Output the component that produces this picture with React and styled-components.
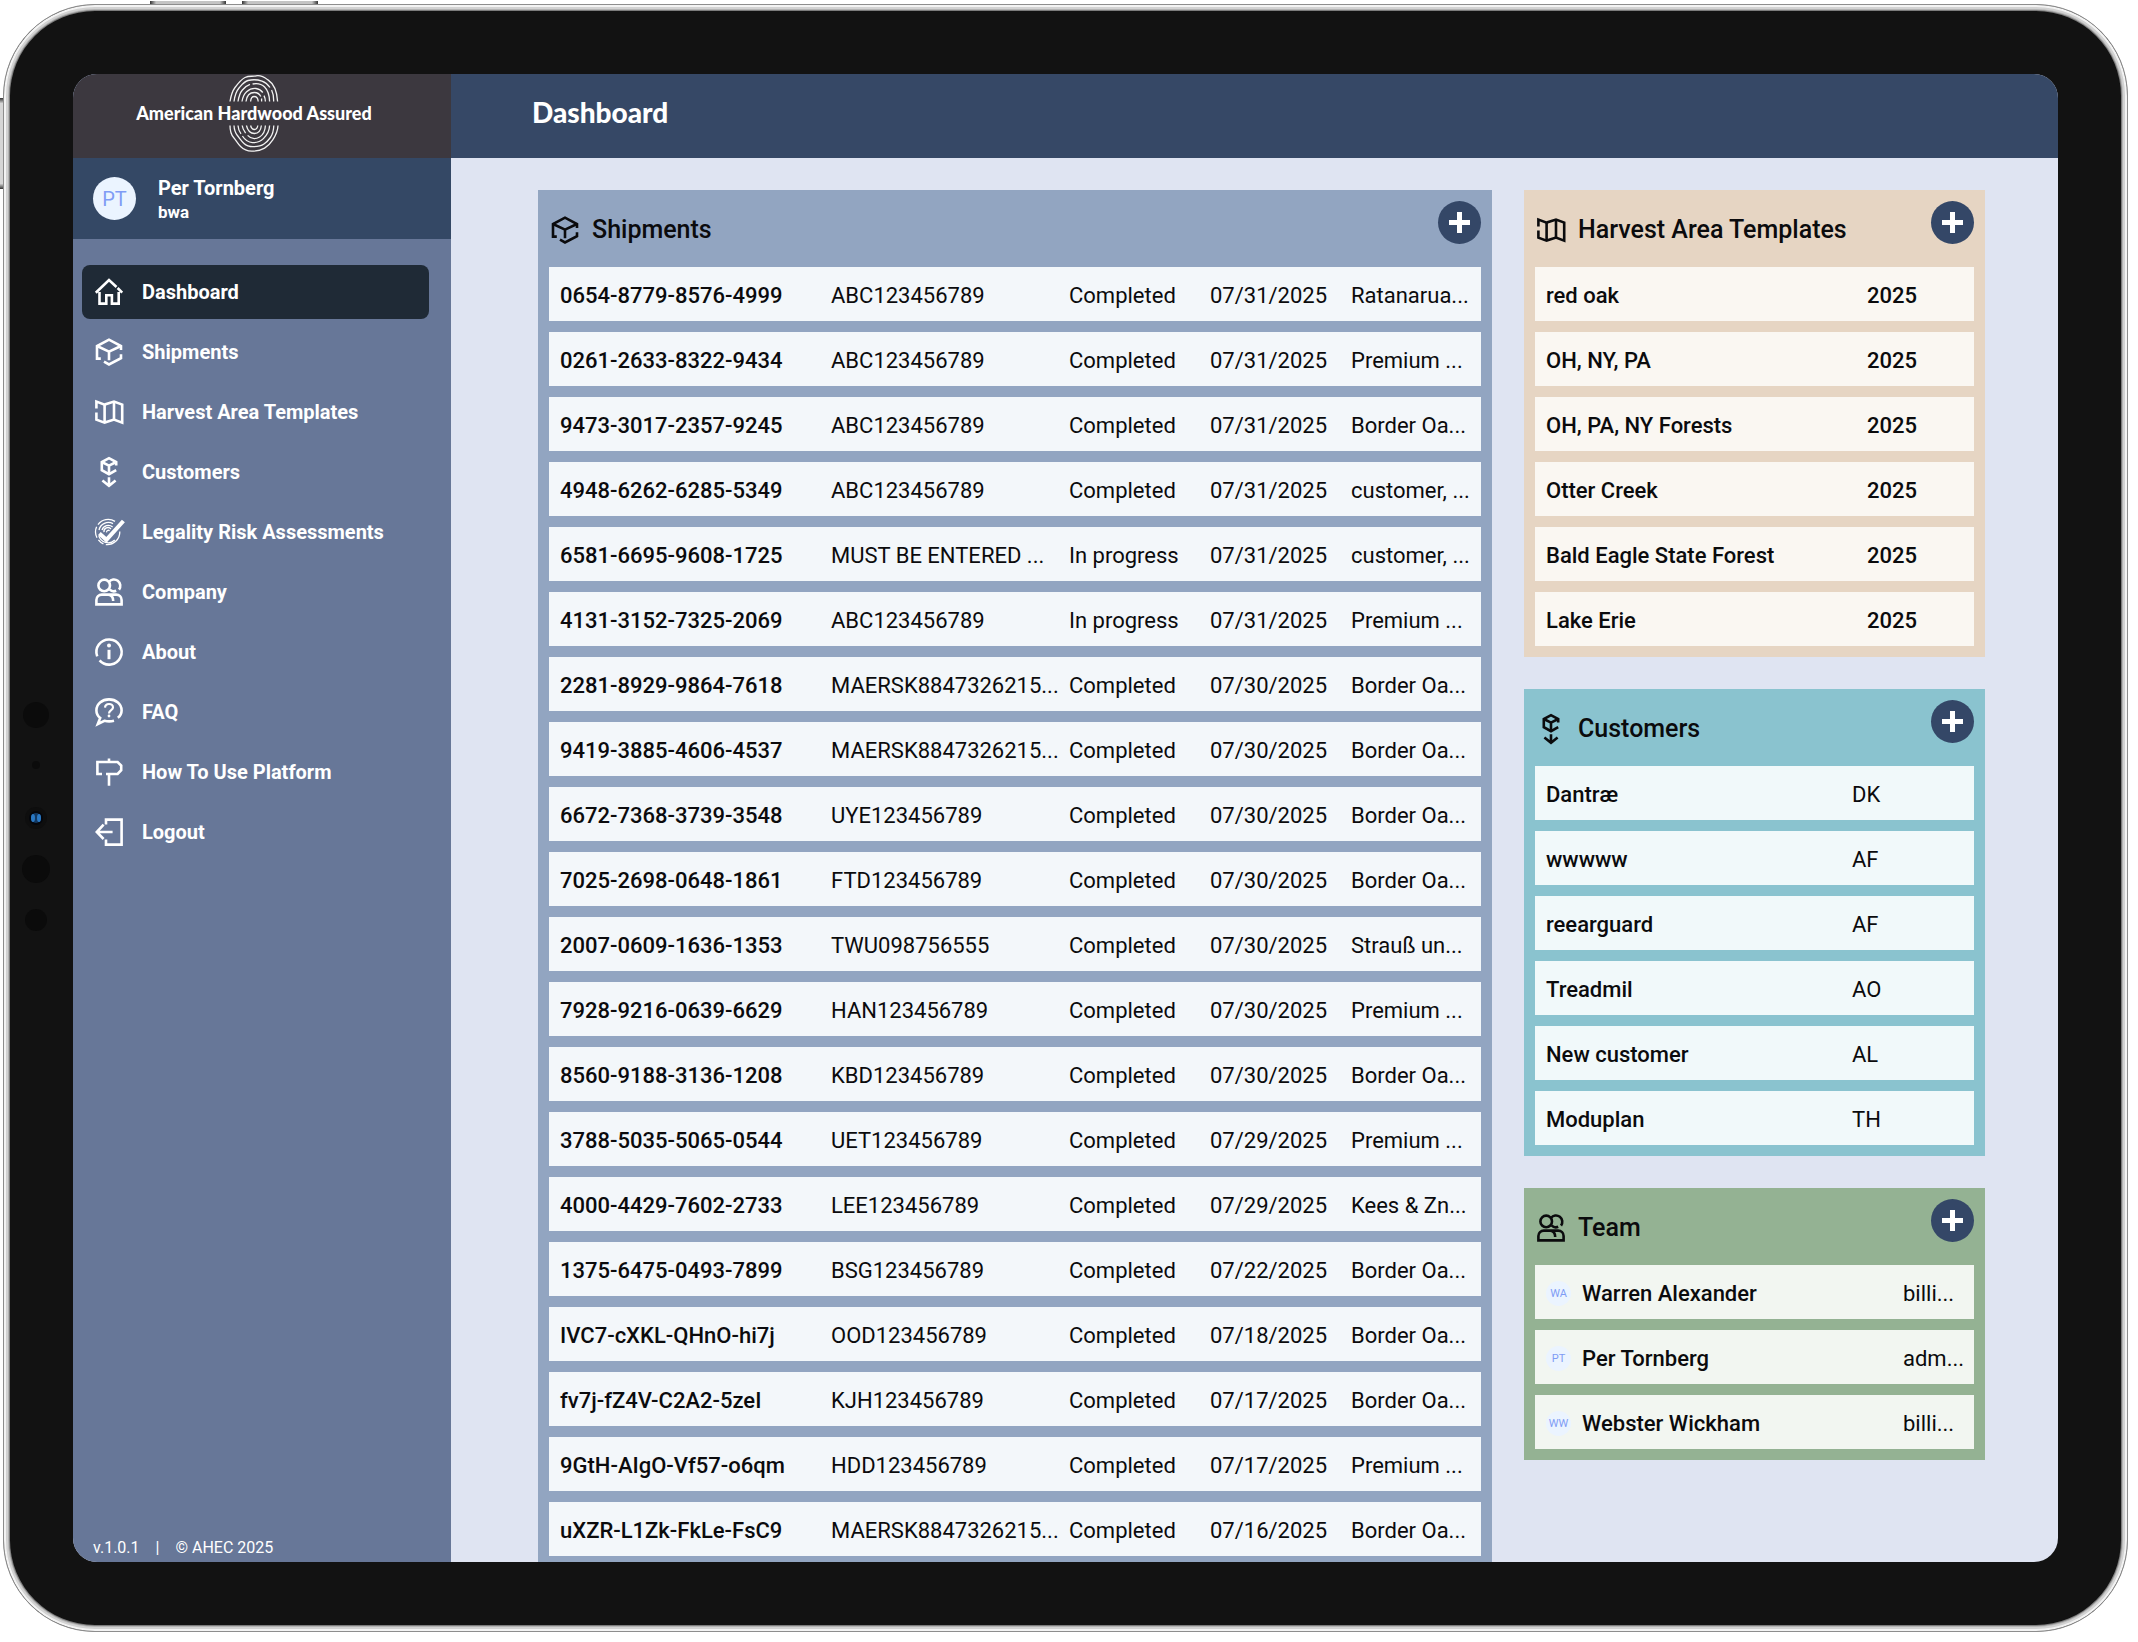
import React from 'react';
import styled, { createGlobalStyle } from 'styled-components';

const GlobalStyle = createGlobalStyle`
    * {
        box-sizing: border-box;
    }

    body {
        margin: 0;
        background: #ffffff;
        color: #0b0b0d;
        font-family: Roboto, "Liberation Sans", sans-serif;
        font-size: 22px;
    }

    h1, h2, p {
        margin: 0;
    }
`

const Page = styled.div`
    display: flex;
    height: 100vh;
    padding: 4px 10px 10px 3px;
`

const Device = styled.div`
    position: relative;
    flex: 1;
    display: flex;
    min-width: 0;
    padding: 69px;
    border: 1px solid #8d8d8d;
    border-radius: 92px;
    background: #121212;
    box-shadow:
        inset 0 0 0 2px #f3f3f3,
        inset 0 0 0 4px #d2d2d2,
        inset 0 0 0 5px #b4b4b4,
        inset 0 0 0 6px #7c7c7c;
`

const TopKey = styled.span`
    position: absolute;
    top: -4px;
    left: ${props => props.$left}px;
    width: 76px;
    height: 3px;
    background: linear-gradient(90deg, #333333, #c4c4c4 8%, #c4c4c4 92%, #333333);
`

const SideKey = styled.span`
    position: absolute;
    top: 93px;
    left: -4px;
    width: 3px;
    height: 91px;
    background: linear-gradient(#333333, #d6d6d6 6%, #d6d6d6 94%, #333333);
`

const Camera = styled.svg`
    position: absolute;
    left: 16px;
    top: 50%;
    width: 32px;
    height: 232px;
    margin-top: -116px;
`

const Screen = styled.div`
    flex: 1;
    display: flex;
    min-width: 0;
    overflow: hidden;
    border-radius: 24px;
    background: #dfe4f2;
`

const Sidebar = styled.aside`
    width: 378px;
    flex-shrink: 0;
    display: flex;
    flex-direction: column;
    background: #677798;
    color: #ffffff;
`

const Logo = styled.a`
    height: 84px;
    display: flex;
    flex-direction: column;
    align-items: center;
    padding: 1px 16px 0 0;
    background: #3c383f;
    color: #ffffff;
    font-family: Lato, sans-serif;
    font-size: 18px;
    font-weight: 900;
    line-height: 23px;
    text-decoration: none;
`

const Rings = styled.svg`
    width: 50px;
    height: 27px;
    fill: none;
    stroke: #f1f1f1;
    stroke-width: 1.3;
`

const Profile = styled.div`
    display: flex;
    align-items: center;
    gap: 22px;
    height: 81px;
    padding-left: 20px;
    background: #344865;
    font-weight: 700;
    line-height: 24px;
`

const ProfileText = styled.div`
    padding-top: 3px;
`

const ProfileName = styled.p`
    font-size: 20px;
`

const ProfileCompany = styled.p`
    font-size: 17px;
`

const Avatar = styled.span`
    display: inline-flex;
    align-items: center;
    justify-content: center;
    flex-shrink: 0;
    width: ${props => props.$small ? 25 : 43}px;
    height: ${props => props.$small ? 25 : 43}px;
    border-radius: 50%;
    background: #ebf4ff;
    color: #7f9cf5;
    font-size: ${props => props.$small ? 11 : 20}px;
    font-weight: 400;
`

const Nav = styled.nav`
    display: flex;
    flex-direction: column;
    gap: 6px;
    padding: 26px 22px 0 9px;
`

const NavItem = styled.a`
    display: flex;
    align-items: center;
    gap: 19px;
    height: 54px;
    padding-left: 13px;
    border-radius: 8px;
    background: ${props => props.$active ? '#1f2a36' : 'transparent'};
    color: #ffffff;
    font-size: 20px;
    font-weight: 700;
    text-decoration: none;
`

const IconSvg = styled.svg`
    width: 28px;
    height: 28px;
    flex-shrink: 0;
    overflow: visible;
    fill: none;
    stroke: currentColor;
    stroke-width: 2.6;
`

const Footer = styled.footer`
    display: flex;
    gap: 16px;
    margin-top: auto;
    padding: 0 20px 4px;
    font-size: 16px;
    line-height: 20px;
`

const Content = styled.div`
    flex: 1;
    min-width: 0;
    display: flex;
    flex-direction: column;
`

const Header = styled.header`
    display: flex;
    align-items: center;
    flex-shrink: 0;
    height: 84px;
    padding: 0 81px 9px;
    background: #364866;
    color: #ffffff;
`

const PageTitle = styled.h1`
    font-family: Lato, sans-serif;
    font-size: 28px;
    font-weight: 900;
`

const Board = styled.main`
    display: grid;
    grid-template-columns: minmax(0, 954fr) minmax(0, 461fr);
    align-items: start;
    gap: 32px;
    padding: 32px 73px 0 87px;
`

const Column = styled.div`
    display: flex;
    flex-direction: column;
    gap: 32px;
`

const PanelBox = styled.section`
    padding: 0 11px;
    background: ${props => props.$color};

    td {
        background: ${props => props.$rowColor};
    }
`

const PanelHeader = styled.div`
    display: flex;
    justify-content: space-between;
    align-items: flex-start;
    height: 66px;
    padding-top: 11px;
`

const PanelTitle = styled.h2`
    display: flex;
    align-items: center;
    gap: 13px;
    padding: 12px 0 0 2px;
    font-size: 25px;
    font-weight: 500;
    line-height: 34px;
`

const AddButton = styled.button`
    display: flex;
    align-items: center;
    justify-content: center;
    width: 43px;
    height: 43px;
    padding: 0;
    border: 0;
    border-radius: 50%;
    background: #344767;
    color: #ffffff;

    svg {
        width: 21px;
        height: 21px;
        fill: currentColor;
    }
`

const Table = styled.table`
    width: 100%;
    table-layout: fixed;
    border-collapse: separate;
    border-spacing: 0 11px;
`

const Cell = styled.td`
    height: 54px;
    padding: 2px 0 0 ${props => props.$first ? 11 : 0}px;
    font-weight: ${props => props.$strong ? 500 : 400};
    white-space: nowrap;
`

const Member = styled.span`
    display: flex;
    align-items: center;
    gap: 11px;
`

const icons = {
    home: (
        <>
            <path d="M.8 14.8 14 2l7.5 7M22.6 10l4.6 4.6" />
            <path d="M4.5 14v11.600h6.800v-8.400h5.600v8.400h6.800V14" />
        </>
    ),
    box: (
        <>
            <path d="M26 12V8L14 1.600 2 8v12.600h3.800" />
            <path d="m2 8 12 5.600L26 8M14 13.600v8.600" />
            <path d="m9 23.600 5 2.800 12-6.200v-4" />
        </>
    ),
    map: (
        <>
            <path d="M1.400 10.400V3.600l8.200 3 9.400-3 8.200 3v18l-8.200-3-9.400 3-8.200-3v-7" />
            <path d="M9.600 6.600v18M19 3.600v18" />
        </>
    ),
    customer: (
        <>
            <path d="M21.200 7.600V4L14 .2 6.800 4v8.200l7.200 4 7.200-4" />
            <path d="M6.800 4 14 7.600 21.200 4M14 7.600v8" />
            <path d="M14 19.200v8.400M7.400 22.600l6.600 5.200 6.600-5.200" />
        </>
    ),
    legality: (
        <>
            <g strokeWidth="1.3">
                <path d="M20 3.400A12.600 12.600 0 0 0 3 6.600M1.600 8.800a12.600 12.600 0 0 0 .4 11M3.400 21.800a12.600 12.600 0 0 0 5 4M10.800 26.600a12.600 12.600 0 0 0 14-13" />
                <path d="M18 5.600A9.600 9.600 0 0 0 4 12M3.800 17.600a9.600 9.600 0 0 0 16 4.400" />
                <path d="M17.600 9A6.600 6.600 0 0 0 7 12M9 14.200a4 4 0 0 1 7-3.200M11.600 14.400a1.800 1.800 0 0 1 3-1.600" />
            </g>
            <path strokeWidth="4" d="m4.400 15.400 7 6.400L28.400 3" />
        </>
    ),
    people: (
        <>
            <circle cx="9.2" cy="7.4" r="5.8" />
            <path d="M14 4a5.800 5.800 0 1 1 10 7.600M14.600 11.400a6 6 0 0 0 6.600 1.400" />
            <path d="M1.400 26.400V22a5.400 5.400 0 0 1 5.400-5.400h14.400a5.400 5.400 0 0 1 5.400 5.400v4.400ZM13.600 16.800c3.600.6 4.600 2.800 4.600 6.200" />
        </>
    ),
    info: (
        <>
            <path d="M2.200 18.400A12.600 12.600 0 1 1 4.600 22.400" />
            <circle cx="14" cy="7.6" r="2" fill="currentColor" stroke="none" />
            <path strokeWidth="3" d="M14 11.800v9.400" />
        </>
    ),
    faq: (
        <>
            <path d="M22.800 19.800c2.600-2 3.800-4.600 3.800-7.400C26.600 6 21 1.400 14 1.400S1.400 6 1.400 12.400c0 3 1.400 5.600 3.800 7.600L2.800 26l6.600-3.200c3.200.8 6.400.8 9.600 0" />
            <path strokeWidth="2.2" d="M10 9.600c.2-2.400 1.800-3.600 4-3.600s4 1.400 4 3.400c0 2.800-4 2.600-4 6" />
            <circle cx="14" cy="18" r="1.4" fill="currentColor" stroke="none" />
        </>
    ),
    sign: (
        <path d="M14 .4V4M7 16H2.400V4h20.200l3.600 3.600v4.600L22.600 16H11M14 16v11.800" />
    ),
    logout: (
        <path d="M11 6.600v-5h15.600v25H11v-5M17.600 14H2M8.600 6.600 1.800 14l6.800 7" />
    ),
}

const Icon = ({ name }) => (
    <IconSvg viewBox="0 0 28 28" aria-hidden="true">{icons[name]}</IconSvg>
)

const navItems = [
    ['home', 'Dashboard'],
    ['box', 'Shipments'],
    ['map', 'Harvest Area Templates'],
    ['customer', 'Customers'],
    ['legality', 'Legality Risk Assessments'],
    ['people', 'Company'],
    ['info', 'About'],
    ['faq', 'FAQ'],
    ['sign', 'How To Use Platform'],
    ['logout', 'Logout'],
]

const shipments = [
    ['0654-8779-8576-4999', 'ABC123456789', 'Completed', '07/31/2025', 'Ratanarua...'],
    ['0261-2633-8322-9434', 'ABC123456789', 'Completed', '07/31/2025', 'Premium ...'],
    ['9473-3017-2357-9245', 'ABC123456789', 'Completed', '07/31/2025', 'Border Oa...'],
    ['4948-6262-6285-5349', 'ABC123456789', 'Completed', '07/31/2025', 'customer, ...'],
    ['6581-6695-9608-1725', 'MUST BE ENTERED ...', 'In progress', '07/31/2025', 'customer, ...'],
    ['4131-3152-7325-2069', 'ABC123456789', 'In progress', '07/31/2025', 'Premium ...'],
    ['2281-8929-9864-7618', 'MAERSK8847326215...', 'Completed', '07/30/2025', 'Border Oa...'],
    ['9419-3885-4606-4537', 'MAERSK8847326215...', 'Completed', '07/30/2025', 'Border Oa...'],
    ['6672-7368-3739-3548', 'UYE123456789', 'Completed', '07/30/2025', 'Border Oa...'],
    ['7025-2698-0648-1861', 'FTD123456789', 'Completed', '07/30/2025', 'Border Oa...'],
    ['2007-0609-1636-1353', 'TWU098756555', 'Completed', '07/30/2025', 'Strauß un...'],
    ['7928-9216-0639-6629', 'HAN123456789', 'Completed', '07/30/2025', 'Premium ...'],
    ['8560-9188-3136-1208', 'KBD123456789', 'Completed', '07/30/2025', 'Border Oa...'],
    ['3788-5035-5065-0544', 'UET123456789', 'Completed', '07/29/2025', 'Premium ...'],
    ['4000-4429-7602-2733', 'LEE123456789', 'Completed', '07/29/2025', 'Kees & Zn...'],
    ['1375-6475-0493-7899', 'BSG123456789', 'Completed', '07/22/2025', 'Border Oa...'],
    ['IVC7-cXKL-QHnO-hi7j', 'OOD123456789', 'Completed', '07/18/2025', 'Border Oa...'],
    ['fv7j-fZ4V-C2A2-5zeI', 'KJH123456789', 'Completed', '07/17/2025', 'Border Oa...'],
    ['9GtH-AIgO-Vf57-o6qm', 'HDD123456789', 'Completed', '07/17/2025', 'Premium ...'],
    ['uXZR-L1Zk-FkLe-FsC9', 'MAERSK8847326215...', 'Completed', '07/16/2025', 'Border Oa...'],
]

const templates = [
    ['red oak', '2025'],
    ['OH, NY, PA', '2025'],
    ['OH, PA, NY Forests', '2025'],
    ['Otter Creek', '2025'],
    ['Bald Eagle State Forest', '2025'],
    ['Lake Erie', '2025'],
]

const customers = [
    ['Dantræ', 'DK'],
    ['wwwww', 'AF'],
    ['reearguard', 'AF'],
    ['Treadmil', 'AO'],
    ['New customer', 'AL'],
    ['Moduplan', 'TH'],
]

const team = [
    ['WA', 'Warren Alexander', 'billi...'],
    ['PT', 'Per Tornberg', 'adm...'],
    ['WW', 'Webster Wickham', 'billi...'],
]

const teamRows = team.map(([initials, name, role]) => [
    <Member><Avatar $small>{initials}</Avatar>{name}</Member>,
    role,
])

// widths are for the columns after the first, which takes what is left
const Panel = ({ title, icon, color, rowColor, widths, rows, allStrong }) => (
    <PanelBox $color={color} $rowColor={rowColor}>
        <PanelHeader>
            <PanelTitle><Icon name={icon} />{title}</PanelTitle>
            <AddButton type="button" aria-label={`Add to ${title}`}>
                <svg viewBox="0 0 21 21"><path d="M8 0h5v8h8v5h-8v8H8v-8H0V8h8z" /></svg>
            </AddButton>
        </PanelHeader>
        <Table>
            <colgroup>
                <col />
                {widths.map((width, i) => <col key={i} width={width} />)}
            </colgroup>
            <tbody>
                {rows.map((row, i) => (
                    <tr key={i}>
                        {row.map((value, j) => (
                            <Cell key={j} $first={j === 0} $strong={j === 0 || allStrong}>{value}</Cell>
                        ))}
                    </tr>
                ))}
            </tbody>
        </Table>
    </PanelBox>
)

const TopRings = () => (
    <Rings viewBox="0 0 50 27" aria-hidden="true">
        <path d="M1 26.500c1-6 2-10 5-14s6-8 10-10 7-.8 11-1.600 8 1 12 4c6 4 9 11 9.600 21.600" />
        <path d="M5 26.500c.8-6 2-10 5-13.500s5-6.500 9-7.500 10-.8 14 .6 6 3.400 8 6.400M42.600 15c1.400 3 2.200 7 2 11.500" />
        <path d="M9 26.500c.8-5 1.800-8.500 4.400-11.500S18 10.400 21 9.400M23.600 9c5-1 9 0 12 3s4.800 7 5 14.500" />
        <path d="M13 26.500c.6-4 2-7.500 4.600-9.800s6-3.500 9.400-3.200 5 1.800 6.800 4M35 20.600c1 2 1.400 4 1.400 5.900" />
        <path d="M17 26.500c.6-5 3.400-9 8.400-9 3.600 0 5.400 2 6.400 4M32.600 23.600v2.900M21.600 26.500c.2-3 1.400-5 3.600-5s3.800 2 4 5" />
    </Rings>
)

const BottomRings = () => (
    <Rings viewBox="0 0 50 27" aria-hidden="true">
        <path d="M1 .5c0 5 1 9 3.600 12s4 6 7 9 6 4.600 11 4.600 9-.6 13-3 6-5 8-8S48.800 7 49 .5" />
        <path d="M5 .5c.2 4 1 7 3.400 10s4 5.500 6.600 8 5 3.200 9 3.200 8-.6 11-2.700 4.600-4 6.400-6.500S44.600 6 44.800.5" />
        <path d="M9 .5c.2 3 .8 5.500 3 8.400M13.400 11c2.600 4 5 6.400 10 6.600s8-1 11-4 6-7 6.200-13.100" />
        <path d="M13.200.5c.4 3 1.400 5 3.400 7.600M18.600 10.400c3.400 3.600 8 4 12 1.600s5.600-7 5.800-11.500" />
        <path d="M17.400.5c1 4 3.600 8 8 8s6.400-3 7-8M21.600.5c.6 2.400 1.600 4 3.800 4s3-1.600 3.400-4" />
    </Rings>
)

const App = () => (
    <Page>
        <GlobalStyle />
        <Device>
            <TopKey $left={146} />
            <TopKey $left={238} />
            <SideKey />
            <Camera viewBox="0 0 32 232" fill="#0b0b0b" aria-hidden="true">
                <circle cx="16" cy="13" r="13" />
                <circle cx="16" cy="63" r="4" />
                <circle cx="16" cy="116" r="11" fill="#0e0e0e" />
                <circle cx="16" cy="116" r="7" fill="#04060c" />
                <circle cx="16" cy="116" r="5" fill="#12375f" />
                <ellipse cx="13" cy="116" rx="2" ry="4" fill="#2a78c2" />
                <ellipse cx="19" cy="116" rx="2" ry="4" fill="#2a78c2" />
                <circle cx="16" cy="167" r="14" />
                <circle cx="16" cy="218" r="11" />
            </Camera>
            <Screen>
                <Sidebar>
                    <Logo href="#">
                        <TopRings />
                        American Hardwood Assured
                        <BottomRings />
                    </Logo>
                    <Profile>
                        <Avatar>PT</Avatar>
                        <ProfileText>
                            <ProfileName>Per Tornberg</ProfileName>
                            <ProfileCompany>bwa</ProfileCompany>
                        </ProfileText>
                    </Profile>
                    <Nav>
                        {navItems.map(([icon, label], i) => (
                            <NavItem key={label} href="#" $active={i === 0}>
                                <Icon name={icon} />
                                {label}
                            </NavItem>
                        ))}
                    </Nav>
                    <Footer>
                        <span>v.1.0.1</span>
                        <span>|</span>
                        <span>© AHEC 2025</span>
                    </Footer>
                </Sidebar>
                <Content>
                    <Header>
                        <PageTitle>Dashboard</PageTitle>
                    </Header>
                    <Board>
                        <Panel title="Shipments" icon="box" color="#92a5c1" rowColor="#f3f7fa" widths={[238, 141, 141, 130]} rows={shipments} />
                        <Column>
                            <Panel title="Harvest Area Templates" icon="map" color="#e6d5c3" rowColor="#faf7f2" widths={[107]} rows={templates} allStrong />
                            <Panel title="Customers" icon="customer" color="#8ac3cf" rowColor="#f1f9fa" widths={[122]} rows={customers} />
                            <Panel title="Team" icon="people" color="#94b293" rowColor="#f2f6f1" widths={[71]} rows={teamRows} />
                        </Column>
                    </Board>
                </Content>
            </Screen>
        </Device>
    </Page>
)

export default App;
